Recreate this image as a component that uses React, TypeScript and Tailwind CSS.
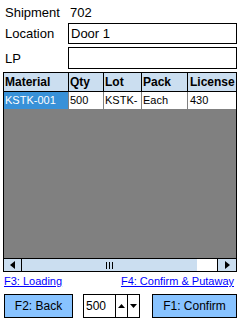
import React from "react";

const font = { fontFamily: '"Liberation Sans", Arial, sans-serif' };

export default function App() {
  return (
    <div className="w-[240px] h-[320px] bg-white text-black text-[13px] leading-none relative overflow-hidden" style={font}>
      <div className="flex items-center h-[22px] pt-[2px]">
        <div className="w-[68px] pl-[5px]">Shipment</div>
        <div className="pl-[2px]">702</div>
      </div>
      <div className="flex items-center h-[22px]">
        <div className="w-[68px] pl-[5px]">Location</div>
        <div className="w-[169px] h-[21px] border border-black flex items-center pl-[2px]">Door 1</div>
      </div>
      <div className="flex items-center h-[26px] pt-[2px]">
        <div className="w-[68px] pl-[5px]">LP</div>
        <div className="w-[169px] h-[22px] border border-black"></div>
      </div>
      <div className="ml-[3px] mt-[2px] w-[234px] h-[200px] border border-black flex flex-col">
        <div className="flex h-[19px] bg-[#cbdef0] font-bold text-[12px] border-b border-black">
          <div className="w-[65px] border-r border-black flex items-center pl-[1px]">Material</div>
          <div className="w-[35px] border-r border-black flex items-center pl-[1px]">Qty</div>
          <div className="w-[38px] border-r border-black flex items-center pl-[1px]">Lot</div>
          <div className="w-[46px] border-r border-black flex items-center pl-[1px]">Pack</div>
          <div className="flex-1 flex items-center pl-[2px]">License</div>
        </div>
        <div className="flex h-[17px] bg-white text-[11px]">
          <div className="w-[65px] border-r border-[#808080] bg-[#3891d8] text-white flex items-center pl-[1px]">KSTK-001</div>
          <div className="w-[35px] border-r border-[#808080] flex items-center pl-[1px]">500</div>
          <div className="w-[38px] border-r border-[#808080] flex items-center pl-[1px]">KSTK-</div>
          <div className="w-[46px] border-r border-[#808080] flex items-center pl-[1px]">Each</div>
          <div className="flex-1 flex items-center pl-[2px]">430</div>
        </div>
        <div className="flex-1 bg-[#808080]"></div>
        <div className="h-[13px] flex bg-[#cbdef0] border-t border-black">
          <div className="w-[18px] border-r border-black flex items-center justify-center">
            <svg width="5" height="8" viewBox="0 0 5 8"><path d="M5 0 L0 4 L5 8 Z" fill="black" /></svg>
          </div>
          <div className="flex-1 flex items-center justify-center">
            <svg width="7" height="7" viewBox="0 0 7 7"><rect x="0" y="0" width="1" height="7" fill="black" /><rect x="3" y="0" width="1" height="7" fill="black" /><rect x="6" y="0" width="1" height="7" fill="black" /></svg>
          </div>
          <div className="w-[20px] bg-white"></div>
          <div className="w-[19px] border-l border-black flex items-center justify-center">
            <svg width="5" height="8" viewBox="0 0 5 8"><path d="M0 0 L5 4 L0 8 Z" fill="black" /></svg>
          </div>
        </div>
      </div>
      <div className="flex justify-between px-[4px] mt-[4px] h-[14px] text-[11px] text-[#0000ff] underline">
        <span>F3: Loading</span>
        <span className="pr-[2px]">F4: Confirm &amp; Putaway</span>
      </div>
      <div className="flex items-center mt-[3px] h-[25px] text-[12px]">
        <div className="ml-[4px] w-[69px] h-[24px] bg-[#88c3ff] border border-black flex items-center justify-center">F2: Back</div>
        <div className="ml-[10px] w-[57px] h-[24px] border border-black flex">
          <div className="w-[32px] border-r border-black flex items-center pl-[2px]">500</div>
          <div className="w-[12px] border-r border-black flex items-center justify-center">
            <svg width="7" height="4" viewBox="0 0 7 4"><path d="M0 4 L3.5 0 L7 4 Z" fill="black" /></svg>
          </div>
          <div className="flex-1 flex items-center justify-center">
            <svg width="7" height="4" viewBox="0 0 7 4"><path d="M0 0 L3.5 4 L7 0 Z" fill="black" /></svg>
          </div>
        </div>
        <div className="ml-[12px] w-[85px] h-[24px] bg-[#88c3ff] border border-black flex items-center justify-center">F1: Confirm</div>
      </div>
    </div>
  );
}
